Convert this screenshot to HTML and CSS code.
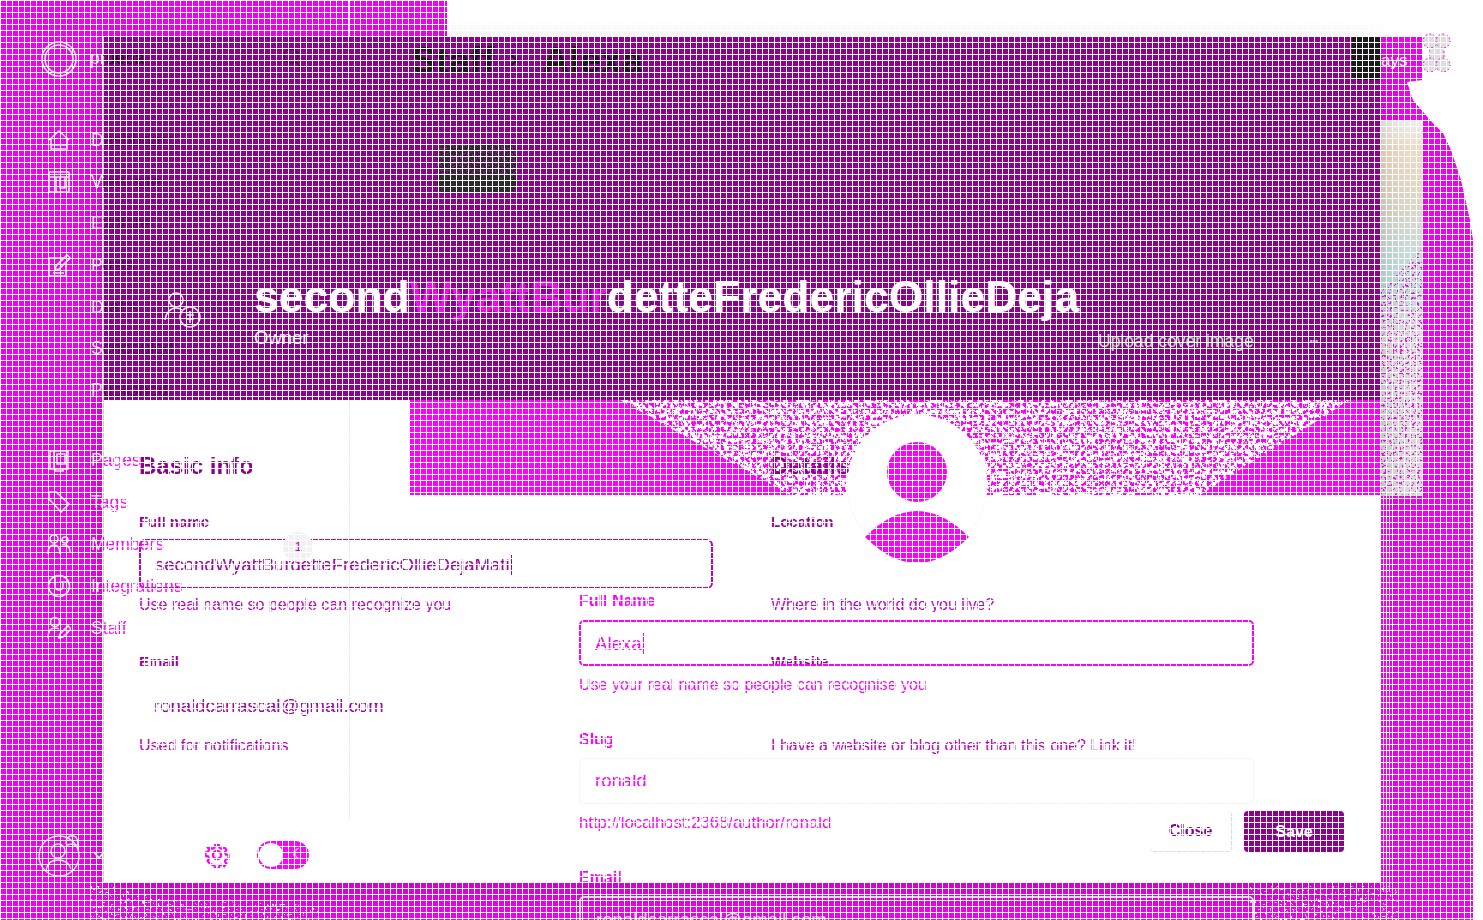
FILE: index.html
```html
<!DOCTYPE html>
<html lang="en">
<head>
  <meta charset="UTF-8">
  <title>Staff - Alexa</title>
  <link rel="stylesheet" href="styles.css">
</head>
<body>
  <svg class="defs" width="0" height="0">
    <filter id="noise-white" x="0" y="0" width="100%" height="100%">
      <feTurbulence type="fractalNoise" baseFrequency="0.28" numOctaves="3" seed="7"/>
      <feColorMatrix values="0 0 0 0 1  0 0 0 0 1  0 0 0 0 1  14 0 0 0 -6.4"/>
    </filter>
    <filter id="noise-grey" x="0" y="0" width="100%" height="100%">
      <feTurbulence type="fractalNoise" baseFrequency="0.4" numOctaves="2" seed="3"/>
      <feColorMatrix values="0 0 0 0 .86  0 0 0 0 .86  0 0 0 0 .86  14 0 0 0 -9"/>
    </filter>
    <filter id="noise-magenta" x="0" y="0" width="100%" height="100%">
      <feTurbulence type="fractalNoise" baseFrequency="0.4" numOctaves="2" seed="11"/>
      <feColorMatrix values="0 0 0 0 1  0 0 0 0 0  0 0 0 0 1  14 0 0 0 -8.2"/>
    </filter>
    <filter id="noise-purple" x="0" y="0" width="100%" height="100%">
      <feTurbulence type="fractalNoise" baseFrequency="0.6" numOctaves="1" seed="5"/>
      <feColorMatrix values="0 0 0 0 .55  0 0 0 0 0  0 0 0 0 .55  14 0 0 0 -7.8"/>
    </filter>
  </svg>

  <div class="screen">
    <div class="backdrop"></div>
    <div class="rule rule-top"></div>

    <!-- cover strip on the right -->
    <div class="cover">
      <svg class="noise cover-noise"><rect width="100%" height="100%" filter="url(#noise-magenta)"/></svg>
    </div>
    <div class="edge-lines"></div>
    <svg class="noise foot-noise-left"><rect width="100%" height="100%" filter="url(#noise-grey)"/></svg>
    <svg class="noise foot-noise-right"><rect width="100%" height="100%" filter="url(#noise-grey)"/></svg>

    <div class="modal">
      <div class="modal-head">
        <div class="crumbs">
          <span class="crumb">Staff</span>
          <svg class="crumb-arrow" width="14" height="18" viewBox="0 0 14 18"><path d="M3 3l7 6-7 6"/></svg>
          <span class="crumb">Alexa</span>
        </div>
        <div class="dark-block">
          <svg class="noise"><rect width="100%" height="100%" filter="url(#noise-purple)"/></svg>
        </div>
        <div class="save-square"></div>
        <div class="profile">
          <svg class="profile-icon" width="44" height="44" viewBox="0 0 44 44">
            <circle cx="14" cy="10" r="7"/>
            <path d="M3 30c1-8 6-12 11-12 2 0 4 .5 6 2"/>
            <circle cx="28" cy="27" r="10"/>
            <path d="M28 21v12M24 25h8M24 29h8"/>
          </svg>
          <div>
            <h1 class="profile-name">second<span class="name-ghost">WyattBur</span>detteFredericOllieDeja</h1>
            <div class="profile-role">Owner</div>
          </div>
        </div>
        <div class="cover-actions">
          <span>Upload cover image</span>
          <span class="dots">•••</span>
        </div>
      </div>

      <div class="modal-body">
        <div class="banner">
          <svg class="noise banner-noise"><rect width="100%" height="100%" filter="url(#noise-white)"/></svg>
        </div>
        <div class="rule rule-body"></div>

        <!-- avatar on the banner, headings stay above it -->
        <div class="avatar">
          <svg width="144" height="152" viewBox="0 0 144 152">
            <circle cx="72" cy="75" r="70" class="avatar-disc"/>
            <circle cx="72" cy="62" r="30" class="avatar-fill"/>
            <path d="M20 127Q72 75 124 127Q72 179 20 127z" class="avatar-fill"/>
          </svg>
        </div>

        <div class="columns">
          <section>
            <h2>Basic info</h2>
            <label class="field-label">Full name</label>
            <div class="input input-focus">secondWyattBurdetteFredericOllieDejaMati<i class="caret"></i></div>
            <p class="hint">Use real name so people can recognize you</p>
            <label class="field-label field-gap">Email</label>
            <div class="input input-second">ronaldcarrascal@gmail.com</div>
            <p class="hint">Used for notifications</p>
          </section>
          <section>
            <h2>Details</h2>
            <label class="field-label">Location</label>
            <div class="input"></div>
            <p class="hint">Where in the world do you live?</p>
            <label class="field-label field-gap">Website</label>
            <div class="input input-second"></div>
            <p class="hint">I have a website or blog other than this one? Link it!</p>
          </section>
        </div>

        <div class="modal-foot">
          <svg class="gear" width="26" height="26" viewBox="0 0 26 26">
            <circle cx="13" cy="13" r="4"/>
            <path d="M11 2h4l.7 3 2.6 1.1 2.7-1.6 2.5 2.8-1.7 2.5 1 2.6 3 .6v4l-3 .6-1 2.6 1.7 2.5-2.5 2.8-2.7-1.6-2.6 1.1-.7 3h-4l-.7-3-2.6-1.1L5 22.5l-2.5-2.8 1.7-2.5-1-2.6-3-.6v-4l3-.6 1-2.6-1.7-2.5L5 4.5l2.7 1.6L10.3 5z" transform="translate(1.3 1.3) scale(.9)"/>
          </svg>
          <div class="toggle"><span class="knob"></span><span class="moon">☾</span></div>
          <div class="foot-actions">
            <button class="btn btn-close">Close</button>
            <button class="btn btn-save">Save</button>
          </div>
        </div>
      </div>
    </div>

    <!-- second form showing through -->
    <div class="overform">
      <label class="over-label">Full Name</label>
      <div class="over-input over-focus">Alexa<i class="caret caret-over"></i></div>
      <p class="over-hint">Use your real name so people can recognise you</p>
      <label class="over-label over-gap">Slug</label>
      <div class="over-input over-plain">ronald</div>
      <p class="over-hint over-url">http://localhost:2368/author/ronald</p>
      <label class="over-label over-gap-small">Email</label>
      <div class="over-input over-dim">ronaldcarrascal@gmail.com</div>
    </div>

    <div class="tip"><span>1</span></div>

    <nav class="sidebar">
      <div class="brand">
        <svg width="38" height="38" viewBox="0 0 38 38" class="ico"><circle cx="19" cy="20" r="17"/><circle cx="19" cy="20" r="14"/></svg>
        <span class="nav-text on-dark">prueba</span>
        <svg class="search" width="22" height="22" viewBox="0 0 22 22"><circle cx="10" cy="9" r="7"/><path d="M15 15l5 6"/></svg>
      </div>
      <ul class="nav-group">
        <li><svg class="ico" viewBox="0 0 24 24"><path d="M2 12L12 3l10 9M4 10v11h16V10M4 17h16"/></svg><span class="nav-text on-faint">Dashboard</span></li>
        <li><svg class="ico" viewBox="0 0 24 24"><rect x="2" y="2" width="20" height="20" rx="1"/><path d="M2 7h20M9 7v15M13 7v11h5V7"/></svg><span class="nav-text on-faint">View site</span></li>
        <li><span class="ico"></span><span class="nav-text on-faint">Explore</span></li>
        <li><svg class="ico" viewBox="0 0 24 24"><path d="M17 5H2v18h17V11M8 17l1-4L20 2l3 3-11 11zM6 20h11"/></svg><span class="nav-text on-faint">Posts</span></li>
        <li><span class="ico"></span><span class="nav-text on-faint">Drafts</span></li>
        <li><span class="ico"></span><span class="nav-text on-faint">Scheduled</span></li>
        <li><span class="ico"></span><span class="nav-text on-faint">Published</span></li>
      </ul>
      <ul class="nav-group nav-lower">
        <li><svg class="ico" viewBox="0 0 24 24"><path d="M3 3h4v18H3zM7 3h14v18H7zM10 6h8v10h-8zM16 21v2H8v-2"/></svg><span class="nav-text on-white">Pages</span></li>
        <li><svg class="ico" viewBox="0 0 24 24"><path d="M2 9V3a1 1 0 0 1 1-1h6l13 12-8 8zM6 6h.01"/></svg><span class="nav-text on-white">Tags</span></li>
        <li><svg class="ico" viewBox="0 0 24 24"><circle cx="7" cy="7" r="4"/><circle cx="18" cy="8" r="3"/><path d="M1 22c0-7 3-9 6-9s6 2 6 9M15 13c4-1 8 1 8 7"/></svg><span class="nav-text on-white">Members</span></li>
        <li><svg class="ico" viewBox="0 0 24 24"><circle cx="12" cy="12" r="10.5"/><path d="M8 3v9a4 4 0 0 0 8 0V8M12 8h9"/></svg><span class="nav-text on-white">Integrations</span></li>
        <li><svg class="ico" viewBox="0 0 24 24"><circle cx="8" cy="6" r="4.5"/><path d="M1 22c0-7 3-10 7-10 2 0 3 .5 4 1M12 22l1-4 8-8 3 3-8 8z"/></svg><span class="nav-text on-white">Staff</span></li>
      </ul>
      <div class="user">
        <svg width="44" height="44" viewBox="0 0 44 44" class="ico"><circle cx="21" cy="23" r="20"/><circle cx="20" cy="18" r="7"/><path d="M8 38c1-8 6-11 12-11s11 3 13 9"/><path d="M32 3c-4 2-5 6-3 9l5-1 5 2c2-4 0-9-3-10z"/></svg>
        <svg class="chevron" width="14" height="10" viewBox="0 0 14 10"><path d="M2 2l5 6 5-6"/></svg>
      </div>
    </nav>

    <div class="topright">ays</div>
    <svg class="flower" width="30" height="42" viewBox="0 0 30 42">
      <rect x="7" y="10" width="15" height="22"/>
      <circle cx="8" cy="9" r="7"/><circle cx="21" cy="9" r="7"/><circle cx="8" cy="33" r="7"/><circle cx="21" cy="33" r="7"/>
    </svg>

    <!-- 1px white lattice lies over the whole picture -->
    <div class="lattice"></div>
  </div>
</body>
</html>
```
FILE: styles.css
```css
html, body {
  margin: 0;
  padding: 0;
  background: #fff;
}
body {
  font-family: "Liberation Sans", Arial, sans-serif;
  color: #8e008e;
}
ul {
  list-style: none;
  margin: 0;
  padding: 0;
}
p, h1, h2 {
  margin: 0;
}
.defs {
  position: absolute;
}
.screen {
  position: relative;
  width: 1483px;
  height: 920px;
  overflow: hidden;
}
.lattice {
  position: absolute;
  inset: 0;
  z-index: 10;
  pointer-events: none;
  background-image:
    linear-gradient(#fff 1px, transparent 1px),
    linear-gradient(90deg, #fff 1px, transparent 1px);
  background-size: 6px 6px;
}
.backdrop {
  position: absolute;
  inset: 0 10px 0 0;
  background: #f000f0;
  clip-path: polygon(0 0, 447px 0, 447px 37px, 1423px 37px, 1423px 80px, 1407px 82px, 1413px 100px, 1430px 120px, 1443px 133px, 1451px 150px, 1461px 180px, 1470px 220px, 1473px 240px, 1473px 920px, 0 920px);
}
.rule {
  position: absolute;
  width: 1px;
  background: #ececec;
}
.rule-top {
  left: 349px;
  top: 0;
  height: 37px;
}
.rule-body {
  left: 245px;
  top: 0;
  height: 420px;
}
.noise {
  display: block;
  width: 100%;
  height: 100%;
}

/* right side */
.cover {
  position: absolute;
  left: 1380px;
  top: 120px;
  width: 43px;
  height: 375px;
  background: linear-gradient(#eee 0, #eed9c2 8%, #dcd6c6 22%, #c8dada 35%, #bcdcdc 45%, #dcdcdc 56%, #d8d8d8 100%);
  border-bottom: 1px solid #ddd;
}
.cover-noise {
  position: absolute;
  inset: 0;
  clip-path: polygon(0 46%, 100% 34%, 100% 100%, 0 100%);
}
.edge-lines {
  position: absolute;
  left: 1380px;
  top: 496px;
  width: 10px;
  height: 396px;
  background: repeating-linear-gradient(90deg, #ddd 0 1px, #f0f 1px 3px);
}
.foot-noise-left {
  position: absolute;
  left: 90px;
  top: 884px;
  width: 230px;
  height: 36px;
  clip-path: polygon(0 0, 8% 0, 30% 40%, 100% 60%, 100% 100%, 0 100%);
}
.foot-noise-right {
  position: absolute;
  left: 1250px;
  top: 886px;
  width: 150px;
  height: 34px;
}

/* modal */
.modal {
  position: absolute;
  left: 103px;
  top: 37px;
  z-index: 1;
  width: 1277px;
  height: 845px;
  box-sizing: border-box;
  border-left: 1px solid #ccc;
  background: #fff;
  box-shadow: 0 10px 30px rgba(0, 0, 0, 0.18);
  display: flex;
  flex-direction: column;
}
.modal-head {
  position: relative;
  height: 363px;
  flex-shrink: 0;
  background: #8e008e;
  color: #fff;
}
.crumbs {
  display: flex;
  align-items: center;
  gap: 13px;
  padding: 3px 0 0 307px;
}
.crumb {
  font-size: 37.5px;
  line-height: 40px;
  font-weight: 700;
  color: #1a1a1a;
}
.crumb-arrow {
  margin-right: 8px;
}
.crumb-arrow path {
  fill: none;
  stroke: #1a1a1a;
  stroke-width: 2;
}
.dark-block {
  position: absolute;
  left: 333px;
  top: 108px;
  width: 79px;
  height: 47px;
  border-radius: 6px;
  background: #2b2b2b;
  overflow: hidden;
}
.dark-block .noise {
  clip-path: inset(0 0 35% 0);
}
.save-square {
  position: absolute;
  right: 0;
  top: 0;
  width: 28px;
  height: 43px;
  border-radius: 0 0 0 5px;
  background: #1a1a1a;
}
.profile {
  position: absolute;
  left: 58px;
  top: 238px;
  display: flex;
  gap: 48px;
}
.profile-icon {
  margin-top: 15px;
  fill: none;
  stroke: #e6e6e6;
  stroke-width: 1.5;
}
.profile-name {
  font-size: 44.5px;
  line-height: 44px;
  font-weight: 700;
  white-space: nowrap;
}
.name-ghost {
  color: #f0f;
}
.profile-role {
  margin-top: 9px;
  font-size: 18.5px;
  line-height: 20px;
  color: #eee;
}
.cover-actions {
  position: absolute;
  left: 994px;
  top: 293px;
  display: flex;
  gap: 56px;
  font-size: 17.5px;
  line-height: 22px;
  color: #c6d8c8;
}
.dots {
  font-size: 8px;
}
.modal-body {
  position: relative;
  flex: 1;
}
.banner {
  position: absolute;
  left: 306px;
  top: 0;
  right: 0;
  height: 95px;
  background: #f0f;
  overflow: hidden;
}
.banner-noise {
  clip-path: polygon(210px 0, 940px 0, 790px 100%, 380px 100%);
}
.columns {
  position: relative;
  display: grid;
  grid-template-columns: 632px 574px;
  padding: 52px 0 0 35px;
}
h2 {
  font-size: 24px;
  line-height: 27px;
  font-weight: 700;
  color: #8e008e;
}
.field-label {
  display: block;
  margin-top: 33px;
  font-size: 15px;
  line-height: 20px;
  font-weight: 700;
  color: #a000a0;
}
.field-gap {
  margin-top: 37px;
}
.input {
  box-sizing: border-box;
  width: 574px;
  height: 50px;
  margin-top: 7px;
  padding: 0 15px;
  font-size: 18.5px;
  line-height: 48px;
  color: #a000a0;
  white-space: nowrap;
}
.input-focus {
  border: 2px solid #c000c0;
  border-radius: 6px;
  padding: 0 14px;
}
.input-second {
  height: 48px;
  margin-top: 10px;
}
.caret {
  display: inline-block;
  width: 1px;
  height: 20px;
  margin-left: 1px;
  vertical-align: -4px;
  background: #a000a0;
}
.hint {
  margin-top: 6px;
  font-size: 16px;
  line-height: 20px;
  color: #c000c0;
}
.modal-foot {
  position: absolute;
  left: 0;
  right: 0;
  bottom: 13px;
  display: flex;
  align-items: flex-end;
  padding: 0 36px 0 100px;
  height: 58px;
}
.gear {
  margin-bottom: 1px;
  fill: none;
  stroke: #f0f;
  stroke-width: 2.4;
}
.toggle {
  position: relative;
  width: 52px;
  height: 28px;
  margin: 0 0 0 27px;
  border-radius: 14px;
  background: #f0f;
}
.knob {
  position: absolute;
  left: 2px;
  top: 2px;
  width: 24px;
  height: 24px;
  border-radius: 50%;
  background: #fff;
}
.moon {
  position: absolute;
  right: 5px;
  top: 5px;
  font-size: 13px;
  line-height: 16px;
  color: #fff;
}
.foot-actions {
  margin-left: auto;
  align-self: flex-start;
  display: flex;
  gap: 12px;
}
.btn {
  box-sizing: border-box;
  height: 41px;
  font-family: inherit;
  font-size: 16px;
  font-weight: 700;
  border-radius: 4px;
}
.btn-close {
  width: 82px;
  border: 0;
  border-right: 1px solid #ddd;
  border-bottom: 1px solid #ddd;
  background: #fff;
  color: #8e008e;
}
.btn-save {
  width: 100px;
  border: 0;
  background: #8e008e;
  color: #fff;
}

/* avatar */
.avatar {
  position: absolute;
  left: 741px;
  top: 10px;
  width: 144px;
  height: 152px;
}
.avatar-disc {
  fill: #fff;
  stroke: #f6f6f6;
}
.avatar-fill {
  fill: #f0f;
}

/* form laid over the modal */
.overform {
  position: absolute;
  left: 579px;
  top: 591px;
  z-index: 3;
  width: 675px;
  color: #f0f;
}
.over-label {
  display: block;
  font-size: 16px;
  line-height: 20px;
  font-weight: 700;
  color: #f0f;
}
.over-gap {
  margin-top: 35px;
}
.over-gap-small {
  margin-top: 35px;
}
.over-input {
  box-sizing: border-box;
  height: 46px;
  margin-top: 9px;
  padding: 0 15px;
  font-size: 18.6px;
  line-height: 44px;
  border-radius: 5px;
  color: #f0f;
}
.over-focus {
  border: 2px solid #f0f;
  padding: 0 14px;
}
.over-plain {
  height: 46px;
  margin-top: 8px;
  border: 1px solid #f2f2f2;
}
.over-dim {
  margin-top: 8px;
  border: 2px solid #d8d8d8;
  color: #d8d8d8;
}
.caret-over {
  background: #f0f;
  height: 22px;
  vertical-align: -5px;
}
.over-hint {
  margin-top: 9px;
  font-size: 16px;
  line-height: 20px;
  color: #f0f;
}
.over-url {
  font-size: 16.7px;
}
.tip {
  position: absolute;
  left: 283px;
  top: 532px;
  z-index: 3;
  width: 30px;
  height: 30px;
  border-radius: 50%;
  background: #f1f1f5;
  text-align: center;
  font-size: 13px;
  line-height: 30px;
  color: #c000c0;
}

/* sidebar */
.sidebar {
  position: absolute;
  left: 0;
  top: 0;
  z-index: 4;
  width: 320px;
  height: 920px;
}
.ico {
  flex: none;
  width: 24px;
  height: 24px;
  fill: none;
  stroke: #e4e4e4;
  stroke-width: 1.6;
}
.brand {
  display: flex;
  align-items: center;
  gap: 12px;
  height: 38px;
  padding: 39px 0 0 40px;
}
.brand .ico {
  width: 38px;
  height: 38px;
}
.search {
  margin-left: 124px;
  fill: none;
  stroke: #4d004d;
  stroke-width: 1.4;
}
.nav-group {
  margin-top: 42px;
}
.nav-group li {
  display: flex;
  align-items: center;
  gap: 20px;
  height: 41.7px;
  padding-left: 47px;
}
.nav-lower {
  margin-top: 28px;
}
.nav-lower li {
  height: 42px;
}
.nav-text {
  font-size: 17.5px;
  line-height: 20px;
  -webkit-background-clip: text;
  background-clip: text;
  color: transparent;
}
.on-dark {
  background-image: linear-gradient(90deg, #e6e6e6 12px, #200020 12px);
}
.on-faint {
  background-image: linear-gradient(90deg, #e6e6e6 12px, #5c005c 12px);
}
.on-white {
  background-image: linear-gradient(90deg, #e6e6e6 12px, #f0f 12px);
}
.user {
  position: absolute;
  left: 38px;
  top: 833px;
  display: flex;
  align-items: center;
  gap: 10px;
}
.user .ico {
  width: 44px;
  height: 44px;
  stroke-width: 1.4;
}
.chevron {
  fill: none;
  stroke: #e4e4e4;
  stroke-width: 1.8;
}
.topright {
  position: absolute;
  left: 1381px;
  top: 51px;
  z-index: 4;
  font-size: 17px;
  line-height: 20px;
  color: #eee;
}
.flower {
  position: absolute;
  left: 1422px;
  top: 32px;
  z-index: 4;
  fill: #dedede;
  stroke: #f0f;
  stroke-width: 1;
  stroke-dasharray: 2 2;
}
```
